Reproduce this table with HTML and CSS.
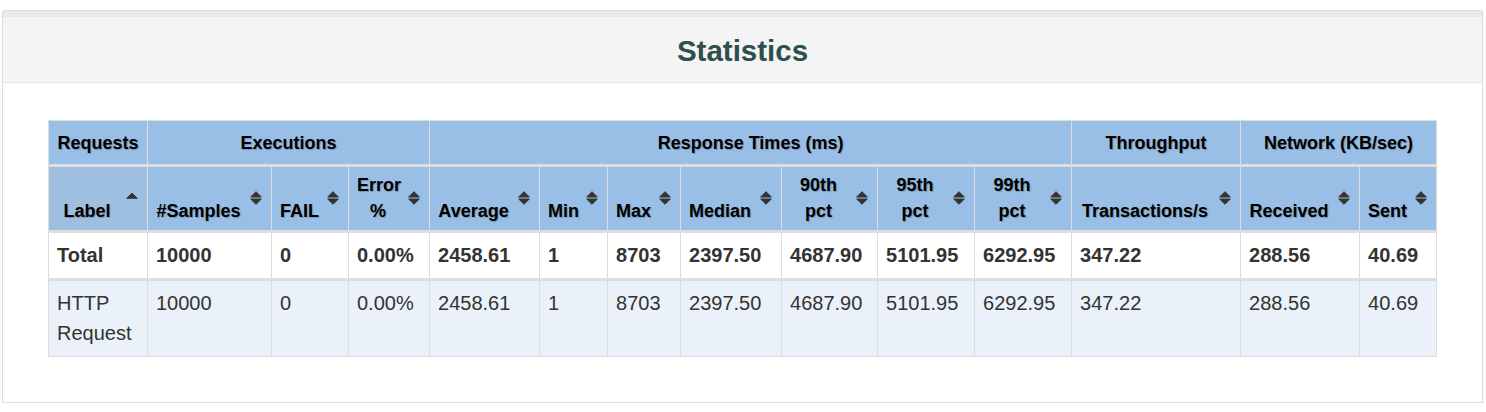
FILE: index.html
```html
<!DOCTYPE html>
<html>
<head>
<meta charset="utf-8">
<link rel="stylesheet" href="styles.css">
</head>
<body>
<div class="panel">
  <div class="panel-heading">
    <h1 class="title">Statistics</h1>
  </div>
  <div class="panel-body">
    <table class="stats">
      <colgroup>
        <col style="width:99px"><col style="width:124px"><col style="width:77px"><col style="width:81px">
        <col style="width:110px"><col style="width:68px"><col style="width:73px"><col style="width:101px">
        <col style="width:96px"><col style="width:97px"><col style="width:97px"><col style="width:169px">
        <col style="width:119px"><col style="width:77px">
      </colgroup>
      <thead>
        <tr class="group-row">
          <th>Requests</th>
          <th colspan="3">Executions</th>
          <th colspan="7">Response Times (ms)</th>
          <th>Throughput</th>
          <th colspan="2">Network (KB/sec)</th>
        </tr>
        <tr class="col-row">
          <th class="sorted">Label<span class="sort-icon asc"><svg width="12" height="14" viewBox="0 0 12 14"><path d="M0.7 8.2 L6 3.2 L11.3 8.2 Z"/></svg></span></th>
          <th>#Samples<span class="sort-icon"><svg width="12" height="14" viewBox="0 0 12 14"><path d="M0.7 6 L6 0.7 L11.3 6 Z M0.7 8 L6 13.3 L11.3 8 Z"/></svg></span></th>
          <th>FAIL<span class="sort-icon"><svg width="12" height="14" viewBox="0 0 12 14"><path d="M0.7 6 L6 0.7 L11.3 6 Z M0.7 8 L6 13.3 L11.3 8 Z"/></svg></span></th>
          <th>Error<br>%<span class="sort-icon"><svg width="12" height="14" viewBox="0 0 12 14"><path d="M0.7 6 L6 0.7 L11.3 6 Z M0.7 8 L6 13.3 L11.3 8 Z"/></svg></span></th>
          <th>Average<span class="sort-icon"><svg width="12" height="14" viewBox="0 0 12 14"><path d="M0.7 6 L6 0.7 L11.3 6 Z M0.7 8 L6 13.3 L11.3 8 Z"/></svg></span></th>
          <th>Min<span class="sort-icon"><svg width="12" height="14" viewBox="0 0 12 14"><path d="M0.7 6 L6 0.7 L11.3 6 Z M0.7 8 L6 13.3 L11.3 8 Z"/></svg></span></th>
          <th>Max<span class="sort-icon"><svg width="12" height="14" viewBox="0 0 12 14"><path d="M0.7 6 L6 0.7 L11.3 6 Z M0.7 8 L6 13.3 L11.3 8 Z"/></svg></span></th>
          <th>Median<span class="sort-icon"><svg width="12" height="14" viewBox="0 0 12 14"><path d="M0.7 6 L6 0.7 L11.3 6 Z M0.7 8 L6 13.3 L11.3 8 Z"/></svg></span></th>
          <th>90th<br>pct<span class="sort-icon"><svg width="12" height="14" viewBox="0 0 12 14"><path d="M0.7 6 L6 0.7 L11.3 6 Z M0.7 8 L6 13.3 L11.3 8 Z"/></svg></span></th>
          <th>95th<br>pct<span class="sort-icon"><svg width="12" height="14" viewBox="0 0 12 14"><path d="M0.7 6 L6 0.7 L11.3 6 Z M0.7 8 L6 13.3 L11.3 8 Z"/></svg></span></th>
          <th>99th<br>pct<span class="sort-icon"><svg width="12" height="14" viewBox="0 0 12 14"><path d="M0.7 6 L6 0.7 L11.3 6 Z M0.7 8 L6 13.3 L11.3 8 Z"/></svg></span></th>
          <th>Transactions/s<span class="sort-icon"><svg width="12" height="14" viewBox="0 0 12 14"><path d="M0.7 6 L6 0.7 L11.3 6 Z M0.7 8 L6 13.3 L11.3 8 Z"/></svg></span></th>
          <th>Received<span class="sort-icon"><svg width="12" height="14" viewBox="0 0 12 14"><path d="M0.7 6 L6 0.7 L11.3 6 Z M0.7 8 L6 13.3 L11.3 8 Z"/></svg></span></th>
          <th>Sent<span class="sort-icon"><svg width="12" height="14" viewBox="0 0 12 14"><path d="M0.7 6 L6 0.7 L11.3 6 Z M0.7 8 L6 13.3 L11.3 8 Z"/></svg></span></th>
        </tr>
      </thead>
      <tbody>
        <tr class="total-row">
          <td>Total</td><td>10000</td><td>0</td><td>0.00%</td><td>2458.61</td><td>1</td><td>8703</td><td>2397.50</td><td>4687.90</td><td>5101.95</td><td>6292.95</td><td>347.22</td><td>288.56</td><td>40.69</td>
        </tr>
        <tr class="data-row">
          <td>HTTP Request</td><td>10000</td><td>0</td><td>0.00%</td><td>2458.61</td><td>1</td><td>8703</td><td>2397.50</td><td>4687.90</td><td>5101.95</td><td>6292.95</td><td>347.22</td><td>288.56</td><td>40.69</td>
        </tr>
      </tbody>
    </table>
  </div>
</div>
</body>
</html>
```
FILE: styles.css
```css
html, body {
  margin: 0;
  padding: 0;
  background: #ffffff;
}
body {
  padding: 10px 3px 0 2px;
  font-family: "Liberation Sans", Arial, Helvetica, sans-serif;
  color: #333333;
}
.panel {
  border: 1px solid #dddddd;
  border-radius: 2px;
  background: #ffffff;
  box-shadow: 0 1px 2px rgba(0, 0, 0, 0.08);
}
.panel-heading {
  background: #f4f4f4;
  border-top: 6px solid #e7eaed;
  border-bottom: 1px solid #e6e6e6;
  height: 65px;
  display: flex;
  align-items: center;
  justify-content: center;
}
.title {
  margin: 0;
  font-size: 29.5px;
  font-weight: bold;
  color: #2f4f4f;
  line-height: 1;
  padding-top: 2px;
}
.panel-body {
  padding: 37px 45px 45px 45px;
}
.stats {
  width: 1388px;
  table-layout: fixed;
  border-collapse: collapse;
  border: 1px solid #dddddd;
}
.stats th {
  background: #99bfe6;
  color: #000000;
  font-weight: bold;
  font-size: 18px;
  line-height: 26px;
  text-align: center;
  white-space: nowrap;
  border-left: 1px solid #dddddd;
  border-right: 1px solid #dddddd;
  text-shadow: 1px 1px 1px rgba(0, 0, 0, 0.22);
}
.group-row th {
  padding: 9px 8px 8px 8px;
  border-bottom: 3px solid #dddddd;
  border-top: 1px solid #dddddd;
}
.col-row th {
  position: relative;
  padding: 5px 30px 6px 8px;
  vertical-align: bottom;
  border-bottom: 3px solid #dddddd;
}
.col-row th.sorted {
  background: #9ebfe0;
}
.sort-icon {
  position: absolute;
  right: 9px;
  top: 50%;
  margin-top: -8px;
  width: 12px;
  height: 14px;
  line-height: 0;
}
.sort-icon svg {
  fill: #333333;
  stroke: #333333;
  stroke-width: 1;
  stroke-linejoin: round;
}
.sort-icon.asc {
  margin-top: -9px;
}
.stats td {
  font-size: 20px;
  line-height: 30px;
  padding: 7px 8px 8px 8px;
  vertical-align: top;
  text-align: left;
  border: 1px solid #dddddd;
  color: #333333;
}
.total-row td {
  font-weight: bold;
  background: #ffffff;
  border-bottom: 3px solid #dddddd;
}
.data-row td {
  background: #eaf1f9;
}
```
